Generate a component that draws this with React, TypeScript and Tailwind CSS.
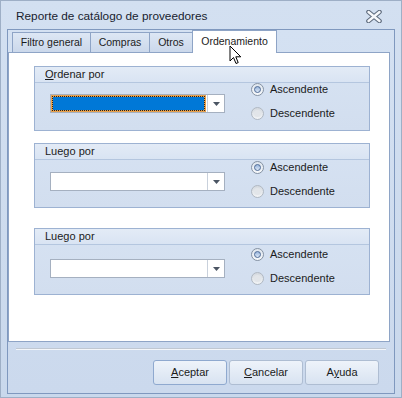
import React from "react";

const tabs = [
  { label: "Filtro general", w: "w-[79px]" },
  { label: "Compras", w: "w-[60px]" },
  { label: "Otros", w: "w-[44px]" },
];

function Radio({ checked, label }: { checked: boolean; label: string }) {
  return (
    <div className="flex items-center h-[14px]">
      {checked ? (
        <span className="w-[13px] h-[13px] rounded-full border border-[#8592a3] bg-gradient-to-b from-[#dfe6ee] to-[#f7f9fb] flex items-center justify-center">
          <span className="w-[7px] h-[7px] rounded-full border border-[#4d6a96] bg-gradient-to-b from-[#9ab6dc] to-[#dbe7f6]" />
        </span>
      ) : (
        <span className="w-[13px] h-[13px] rounded-full border border-[#b0b8c2] bg-gradient-to-b from-[#d4d9df] to-[#f2f4f6] flex items-center justify-center">
          <span className="w-[7px] h-[7px] rounded-full bg-[#e2e5e9]" />
        </span>
      )}
      <span className="ml-[6px] text-[11px] text-[#1b1b1b]">{label}</span>
    </div>
  );
}

function Combo({ selected }: { selected?: boolean }) {
  return (
    <div className="flex w-[175px] h-[19px] border border-[#a5b0c0] bg-white">
      {selected ? (
        <div className="flex-1 p-px bg-[#e8a24e]">
          <div className="w-full h-full bg-[#0078d7] bg-clip-padding border border-dotted border-[#222]" />
        </div>
      ) : (
        <div className="flex-1" />
      )}
      <div className="w-[17px] border-l border-[#c9d1dc] ml-px flex items-center justify-center bg-white">
        <svg width="7" height="4" viewBox="0 0 7 4">
          <path d="M0 0 H7 L3.5 4 Z" fill="#4b5563" />
        </svg>
      </div>
    </div>
  );
}

function Group({
  title,
  mnemonic,
  selected,
  h,
  top,
}: {
  title: string;
  mnemonic?: boolean;
  selected?: boolean;
  h: string;
  top: string;
}) {
  return (
    <div className={`w-[336px] ${h} border border-[#9db2d2] bg-gradient-to-b from-[#d6e2f2] to-[#d2deef] flex flex-col`}>
      <div className="h-[16px] border-b border-[#b4c6df] bg-gradient-to-b from-[#e3ebf6] to-[#d9e4f3] pl-[10px] flex items-center text-[11px] text-[#1b1b1b]">
        {mnemonic ? (
          <span>
            <span className="underline">O</span>rdenar por
          </span>
        ) : (
          title
        )}
      </div>
      <div className={`flex ${top}`}>
        <div className="ml-[15px] mt-[12px]">
          <Combo selected={selected} />
        </div>
        <div className="ml-[26px] flex flex-col gap-[10px]">
          <Radio checked label="Ascendente" />
          <Radio checked={false} label="Descendente" />
        </div>
      </div>
    </div>
  );
}

function Button({ children, def }: { children: React.ReactNode; def?: boolean }) {
  return (
    <div
      className={`w-[74px] h-[25px] rounded-[3px] border ${
        def ? "border-[#8fa9cf]" : "border-[#aebdd2]"
      } bg-gradient-to-b from-[#eef3fa] to-[#d8e3f1] flex items-center justify-center text-[11px] text-[#1b1b1b]`}
    >
      {children}
    </div>
  );
}

export default function App() {
  return (
    <div
      className="relative w-[402px] h-[398px] overflow-hidden border border-[#9eafc6] bg-gradient-to-b from-[#d3e0f1] to-[#c9d8ec] select-none"
      style={{ fontFamily: '"Liberation Sans", Arial, sans-serif' }}
    >
      {/* title bar */}
      <div className="h-[28px] flex items-center pl-[15px] pr-[19px] pt-[3px]">
        <span className="text-[11.8px] text-[#18222f]">Reporte de catálogo de proveedores</span>
        <svg className="ml-auto" width="16" height="13" viewBox="0 0 16 13">
          <path d="M2.5 2 L13.5 11 M13.5 2 L2.5 11" stroke="#5f6c7e" strokeWidth="4.6" strokeLinecap="round" />
          <path d="M2.5 2 L13.5 11 M13.5 2 L2.5 11" stroke="#f6f8fb" strokeWidth="2.4" strokeLinecap="round" />
        </svg>
      </div>

      {/* client area */}
      <div className="mx-[6px] h-[365px] border border-[#7f98be] bg-gradient-to-b from-[#d4e1f2] to-[#cbd9ed] flex flex-col">
        {/* tabs */}
        <div className="flex items-end h-[22px] pl-[4px] relative z-10">
          {tabs.map((t) => (
            <div
              key={t.label}
              className={`${t.w} h-[20px] -mr-px border border-b-0 border-[#8ea4c6] bg-gradient-to-b from-[#dde7f4] to-[#cbd8eb] flex items-center justify-center text-[10.5px] text-[#1b1b1b] pt-px`}
            >
              {t.label}
            </div>
          ))}
          <div className="w-[85px] h-[23px] -mb-px border border-b-0 border-[#8ea4c6] bg-white flex items-center justify-center text-[10.5px] text-[#1b1b1b]">
            Ordenamiento
          </div>
        </div>

        {/* panel */}
        <div className="w-[382px] h-[290px] border border-[#8ea4c6] bg-white pl-[25px] pt-[13px] flex flex-col">
          <Group title="Ordenar por" mnemonic selected h="h-[65px]" top="-mt-[1px]" />
          <div className="mt-[12px]">
            <Group title="Luego por" h="h-[65px]" top="mt-0" />
          </div>
          <div className="mt-[20px]">
            <Group title="Luego por" h="h-[67px]" top="mt-[2px]" />
          </div>
        </div>

        {/* separator */}
        <div className="ml-[8px] mt-[6px] w-[370px] h-[2px] border-t border-[#bfc7d2] bg-[#f3f6fa]" />

        {/* buttons */}
        <div className="mt-[10px] flex justify-end gap-[2px] pr-[15px]">
          <Button def>
            <span>
              <span className="underline">A</span>ceptar
            </span>
          </Button>
          <Button>
            <span>
              <span className="underline">C</span>ancelar
            </span>
          </Button>
          <Button>
            <span>
              A<span className="underline">y</span>uda
            </span>
          </Button>
        </div>
      </div>

      {/* mouse cursor */}
      <svg className="absolute left-[228px] top-[44px] z-20" width="14" height="21" viewBox="0 0 14 21">
        <path
          d="M1 1 L1 16 L4.5 12.5 L7 18.5 L9.2 17.6 L6.8 11.8 L11.8 11.8 Z"
          fill="#ffffff"
          stroke="#000000"
          strokeWidth="1"
          strokeLinejoin="miter"
        />
      </svg>
    </div>
  );
}
